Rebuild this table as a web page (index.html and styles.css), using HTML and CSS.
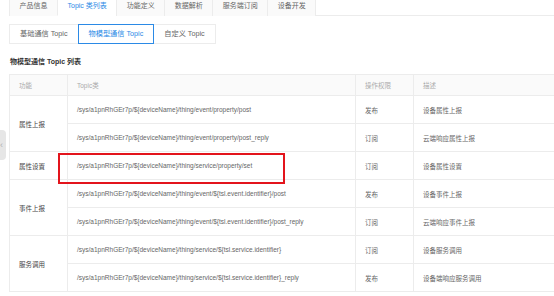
FILE: index.html
```html
<!DOCTYPE html>
<html lang="zh-CN">
<head>
    <meta charset="UTF-8">
    <title>Topic 类列表</title>
    <link rel="stylesheet" href="styles.css">
</head>
<body>
    <div class="side-handle"><span class="side-arrow">&lsaquo;</span></div>

    <div class="page">
        <div class="tabs">
            <a class="tab">产品信息</a>
            <a class="tab tab-active">Topic 类列表</a>
            <a class="tab">功能定义</a>
            <a class="tab">数据解析</a>
            <a class="tab">服务端订阅</a>
            <a class="tab">设备开发</a>
        </div>

        <div class="switch">
            <a class="switch-btn">基础通信 Topic</a>
            <a class="switch-btn switch-active">物模型通信 Topic</a>
            <a class="switch-btn">自定义 Topic</a>
        </div>

        <h2 class="section-title">物模型通信 Topic 列表</h2>

        <div class="table-wrap">
            <table class="topic-table">
                <thead>
                    <tr>
                        <th class="col-func">功能</th>
                        <th class="col-topic">Topic类</th>
                        <th class="col-perm">操作权限</th>
                        <th class="col-desc">描述</th>
                    </tr>
                </thead>
                <tbody>
                    <tr>
                        <td class="func" rowspan="2">属性上报</td>
                        <td>/sys/a1pnRhGEr7p/${deviceName}/thing/event/property/post</td>
                        <td>发布</td>
                        <td>设备属性上报</td>
                    </tr>
                    <tr>
                        <td>/sys/a1pnRhGEr7p/${deviceName}/thing/event/property/post_reply</td>
                        <td>订阅</td>
                        <td>云端响应属性上报</td>
                    </tr>
                    <tr>
                        <td class="func">属性设置</td>
                        <td>/sys/a1pnRhGEr7p/${deviceName}/thing/service/property/set</td>
                        <td>订阅</td>
                        <td>设备属性设置</td>
                    </tr>
                    <tr>
                        <td class="func" rowspan="2">事件上报</td>
                        <td>/sys/a1pnRhGEr7p/${deviceName}/thing/event/${tsl.event.identifier}/post</td>
                        <td>发布</td>
                        <td>设备事件上报</td>
                    </tr>
                    <tr>
                        <td>/sys/a1pnRhGEr7p/${deviceName}/thing/event/${tsl.event.identifier}/post_reply</td>
                        <td>订阅</td>
                        <td>云端响应事件上报</td>
                    </tr>
                    <tr>
                        <td class="func" rowspan="2">服务调用</td>
                        <td>/sys/a1pnRhGEr7p/${deviceName}/thing/service/${tsl.service.identifier}</td>
                        <td>订阅</td>
                        <td>设备服务调用</td>
                    </tr>
                    <tr>
                        <td>/sys/a1pnRhGEr7p/${deviceName}/thing/service/${tsl.service.identifier}_reply</td>
                        <td>发布</td>
                        <td>设备端响应服务调用</td>
                    </tr>
                </tbody>
            </table>
            <div class="highlight"></div>
        </div>
    </div>
</body>
</html>
```

FILE: styles.css
```css
:root {
    --text: #666666;
    --text-strong: #444444;
    --text-muted: #aaaaaa;
    --blue: #2b8ae6;
    --line: #ececec;
    --head-bg: #fafafa;
    --mark: #e3141c;
}

* {
    margin: 0;
    padding: 0;
    box-sizing: border-box;
}

body {
    width: 554px;
    height: 296px;
    overflow: hidden;
    background: #ffffff;
    color: var(--text);
    font-family: "Liberation Sans", "Noto Sans CJK SC", sans-serif;
    font-size: 6.5px;
    position: relative;
}

.page {
    padding-left: 9px;
}

/* top tabs, cut off by the window edge */
.tabs {
    display: flex;
    height: 16px;
    border-bottom: 1px solid var(--line);
}

.tab {
    height: 16px;
    padding: 0 9.5px;
    line-height: 12px;
    font-size: 7px;
    color: var(--text);
    background: var(--head-bg);
    border-left: 1px solid var(--line);
    white-space: nowrap;
}

.tab:last-child {
    border-right: 1px solid var(--line);
}

.tab-active {
    background: #ffffff;
    color: var(--blue);
    border-bottom: 1px solid #ffffff;
}

.switch {
    display: flex;
    margin-top: 8px;
}

.switch-btn {
    height: 20px;
    padding: 0 10px;
    line-height: 18px;
    font-size: 7.2px;
    color: var(--text);
    border: 1px solid var(--line);
    margin-left: -1px;
    white-space: nowrap;
}

.switch-btn:first-child {
    margin-left: 0;
}

.switch-active {
    color: var(--blue);
    border-color: var(--blue);
    position: relative;
}

.section-title {
    margin-top: 13px;
    padding-left: 1px;
    font-size: 7px;
    line-height: 10px;
    font-weight: 700;
    color: #333333;
}

.table-wrap {
    margin-top: 7px;
    position: relative;
}

.topic-table {
    width: 560px;
    border-collapse: collapse;
    table-layout: fixed;
}

.topic-table th,
.topic-table td {
    border: 1px solid var(--line);
    padding: 0 9px;
    text-align: left;
    white-space: nowrap;
    overflow: hidden;
}

.topic-table th {
    height: 21px;
    background: var(--head-bg);
    font-weight: 400;
    color: var(--text-muted);
}

.topic-table td {
    height: 28px;
}

.topic-table .func {
    color: var(--text-strong);
}

.col-func { width: 58px; }
.col-topic { width: 288px; }
.col-perm { width: 58px; }

.highlight {
    position: absolute;
    left: 49px;
    top: 79px;
    width: 227px;
    height: 31px;
    border: 2px solid var(--mark);
}

.side-handle {
    position: absolute;
    left: -6px;
    top: 130px;
    width: 12px;
    height: 30px;
    border-radius: 4px;
    background: #e6e6e6;
    display: flex;
    align-items: center;
    justify-content: flex-end;
    padding-right: 3px;
}

.side-arrow {
    font-size: 9px;
    color: #b0b0b0;
    line-height: 1;
}
```
